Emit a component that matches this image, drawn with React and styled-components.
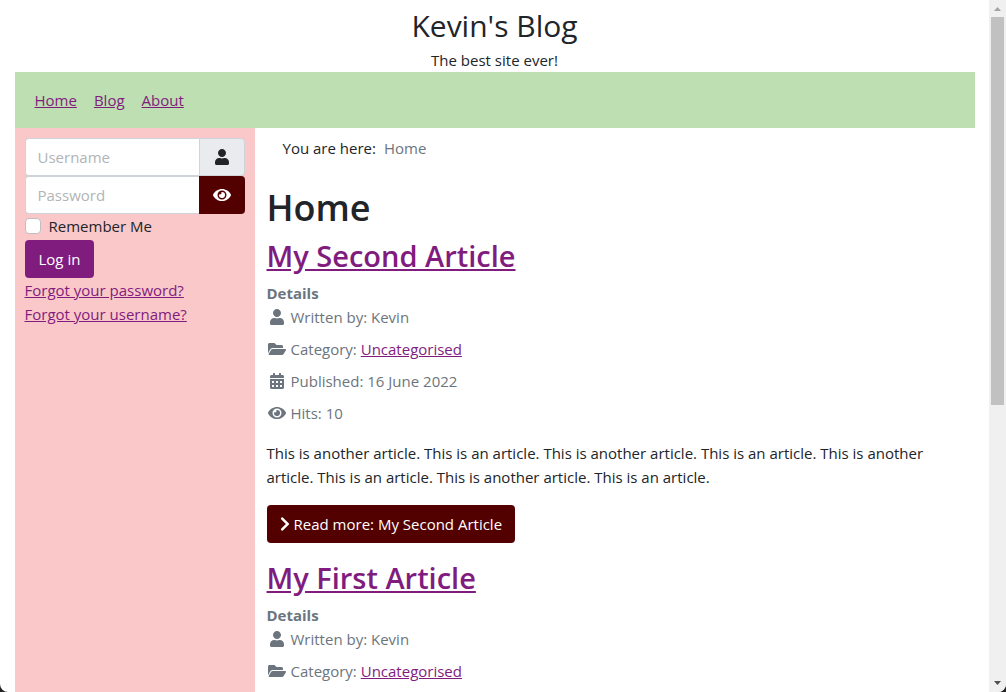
import React from "react";
import styled, { createGlobalStyle } from "styled-components";
import {
  FaCalendarAlt,
  FaChevronRight,
  FaEye,
  FaFolderOpen,
  FaUser
} from "react-icons/fa";

const GlobalStyle = createGlobalStyle`
  *, *::before, *::after {
    box-sizing: border-box;
  }

  body {
    margin: 0;
    background: #222;
    color: #212529;
    font-family: "Open Sans", "Noto Sans", sans-serif;
    font-size: 15px;
    line-height: 24px;
  }

  a {
    color: #811c7f;
  }
`;

const Window = styled.div`
  display: flex;
  height: 100vh;
  overflow: hidden;
  background: #fff;
  border-radius: 0 0 8px 8px;
`;

const Viewport = styled.div`
  flex: 1;
  min-width: 0;
  overflow: hidden;
`;

const Page = styled.div`
  display: flex;
  flex-direction: column;
  max-width: 960px;
  min-height: 100%;
  margin: 0 auto;
`;

const Header = styled.header`
  text-align: center;
`;

const SiteTitle = styled.div`
  padding-top: 4px;
  font-size: 30px;
  line-height: 44px;
`;

const Nav = styled.nav`
  display: flex;
  gap: 17px;
  padding: 16px 20px;
  background: #bedfb2;
`;

const Columns = styled.div`
  display: flex;
  flex: 1;
`;

const Sidebar = styled.aside`
  flex: none;
  width: 25%;
  padding: 10px;
  background: #fac8c8;
`;

const Main = styled.main`
  flex: 1;
  min-width: 0;
  padding: 0 12px;
`;

const InputGroup = styled.div`
  display: flex;
  height: 38px;
`;

const TextInput = styled.input`
  flex: 1;
  min-width: 0;
  padding: 6px 12px;
  border: 1px solid #ced4da;
  border-right: 0;
  border-radius: 4px 0 0 4px;
  background: #fff;
  color: #212529;
  font: inherit;

  &::placeholder {
    color: #b2b4b6;
    opacity: 1;
  }
`;

const Addon = styled.span`
  display: flex;
  align-items: center;
  justify-content: center;
  width: 46px;
  border: 1px solid #ced4da;
  border-radius: 0 4px 4px 0;
  background: #eaebef;
  font-size: 16px;
`;

const AddonButton = styled.button`
  display: flex;
  align-items: center;
  justify-content: center;
  width: 46px;
  padding: 0;
  border: 0;
  border-radius: 0 4px 4px 0;
  background: #520000;
  color: #fff;
  font-size: 18px;
`;

const Remember = styled.div`
  display: flex;
  align-items: center;
  gap: 8px;
  margin-bottom: 2px;
`;

const Checkbox = styled.input`
  appearance: none;
  width: 16px;
  height: 16px;
  margin: 0;
  border: 1px solid #bfbfbf;
  border-radius: 4px;
  background: #fff;

  &:checked {
    background: #811c7f;
  }
`;

const LoginButton = styled.button`
  display: block;
  height: 38px;
  padding: 0 14px;
  border: 0;
  border-radius: 4px;
  background: #811c7f;
  color: #fff;
  font: inherit;
`;

const LinkList = styled.ul`
  margin: 0;
  padding: 0;
  list-style: none;
`;

const Breadcrumb = styled.nav`
  display: flex;
  gap: 8px;
  margin-bottom: 16px;
  padding: 8px 16px;
`;

const Crumb = styled.span`
  color: #6c757d;
`;

const PageTitle = styled.h1`
  margin: 0 0 6px;
  font-size: 36px;
  font-weight: 600;
  line-height: 47px;
`;

const ArticleTitle = styled.h2`
  margin: 0 0 6px;
  font-size: 29px;
  font-weight: 600;
  line-height: 38px;
`;

const Article = styled.article`
  margin-bottom: 16px;
`;

const Info = styled.dl`
  margin: 0 0 8px;
  color: #6c757d;

  dt {
    font-weight: 700;
  }

  dd {
    display: flex;
    align-items: center;
    gap: 4px;
    margin: 0;
    padding-bottom: 8px;
  }
`;

const IconBox = styled.span`
  display: flex;
  justify-content: center;
  width: 20px;
  font-size: ${props => (props.$wide ? 18 : 16)}px;
`;

const Intro = styled.p`
  margin: 0 0 16px;
`;

const ReadMore = styled.a`
  display: inline-flex;
  align-items: center;
  gap: 4px;
  height: 38px;
  padding: 0 13px;
  border-radius: 4px;
  background: #520000;
  color: #fff;
  text-decoration: none;
  vertical-align: top;
`;

const Chevron = styled(FaChevronRight)`
  width: 10px;
  height: 16px;
`;

const Scrollbar = styled.div`
  display: flex;
  flex-direction: column;
  width: 17px;
  background: #f0f0f0;
`;

const Arrow = styled.svg`
  display: block;
  width: 17px;
  height: 17px;
  fill: ${props => props.color};
`;

const Track = styled.div`
  flex: 1;
  padding: 0 2px;
`;

const Thumb = styled.div`
  height: 59%;
  background: #c1c1c1;
`;

const articles = [
  {
    id: 2,
    title: "My Second Article",
    author: "Kevin",
    category: "Uncategorised",
    published: "16 June 2022",
    hits: 10,
    intro:
      "This is another article. This is an article. This is another article. This is an article. This is another article. This is an article. This is another article. This is an article."
  },
  {
    id: 1,
    title: "My First Article",
    author: "Kevin",
    category: "Uncategorised"
  }
];

function LoginForm() {
  return (
    <form onSubmit={e => e.preventDefault()}>
      <InputGroup>
        <TextInput type="text" placeholder="Username" aria-label="Username" />
        <Addon>
          <FaUser />
        </Addon>
      </InputGroup>
      <InputGroup>
        <TextInput
          type="password"
          placeholder="Password"
          aria-label="Password"
        />
        <AddonButton type="button" aria-label="Show Password">
          <FaEye />
        </AddonButton>
      </InputGroup>
      <Remember>
        <Checkbox type="checkbox" id="remember" />
        <label htmlFor="remember">Remember Me</label>
      </Remember>
      <LoginButton type="submit">Log in</LoginButton>
      <LinkList>
        <li>
          <a href="#password">Forgot your password?</a>
        </li>
        <li>
          <a href="#username">Forgot your username?</a>
        </li>
      </LinkList>
    </form>
  );
}

function BlogItem({ article }) {
  return (
    <Article>
      <ArticleTitle>
        <a href={`#article-${article.id}`}>{article.title}</a>
      </ArticleTitle>
      <Info>
        <dt>Details</dt>
        <dd>
          <IconBox>
            <FaUser />
          </IconBox>
          <span>Written by: {article.author}</span>
        </dd>
        <dd>
          <IconBox $wide>
            <FaFolderOpen />
          </IconBox>
          <span>
            Category: <a href="#category">{article.category}</a>
          </span>
        </dd>
        {article.published && (
          <dd>
            <IconBox>
              <FaCalendarAlt />
            </IconBox>
            <span>Published: {article.published}</span>
          </dd>
        )}
        {article.hits && (
          <dd>
            <IconBox $wide>
              <FaEye />
            </IconBox>
            <span>Hits: {article.hits}</span>
          </dd>
        )}
      </Info>
      {article.intro && (
        <>
          <Intro>{article.intro}</Intro>
          <ReadMore href={`#article-${article.id}`}>
            <Chevron />
            Read more: {article.title}
          </ReadMore>
        </>
      )}
    </Article>
  );
}

export default function App() {
  return (
    <Window>
      <GlobalStyle />
      <Viewport>
        <Page>
          <Header>
            <SiteTitle>Kevin's Blog</SiteTitle>
            <div>The best site ever!</div>
          </Header>
          <Nav>
            <a href="#home">Home</a>
            <a href="#blog">Blog</a>
            <a href="#about">About</a>
          </Nav>
          <Columns>
            <Sidebar>
              <LoginForm />
            </Sidebar>
            <Main>
              <Breadcrumb>
                <span>You are here:</span>
                <Crumb>Home</Crumb>
              </Breadcrumb>
              <PageTitle>Home</PageTitle>
              {articles.map(article => (
                <BlogItem key={article.id} article={article} />
              ))}
            </Main>
          </Columns>
        </Page>
      </Viewport>
      <Scrollbar>
        <Arrow viewBox="0 0 17 17" color="#a3a3a3">
          <path d="M5 11h7L8.500 7z" />
        </Arrow>
        <Track>
          <Thumb />
        </Track>
        <Arrow viewBox="0 0 17 17" color="#505050">
          <path d="M5 6h7l-3.500 4z" />
        </Arrow>
      </Scrollbar>
    </Window>
  );
}
